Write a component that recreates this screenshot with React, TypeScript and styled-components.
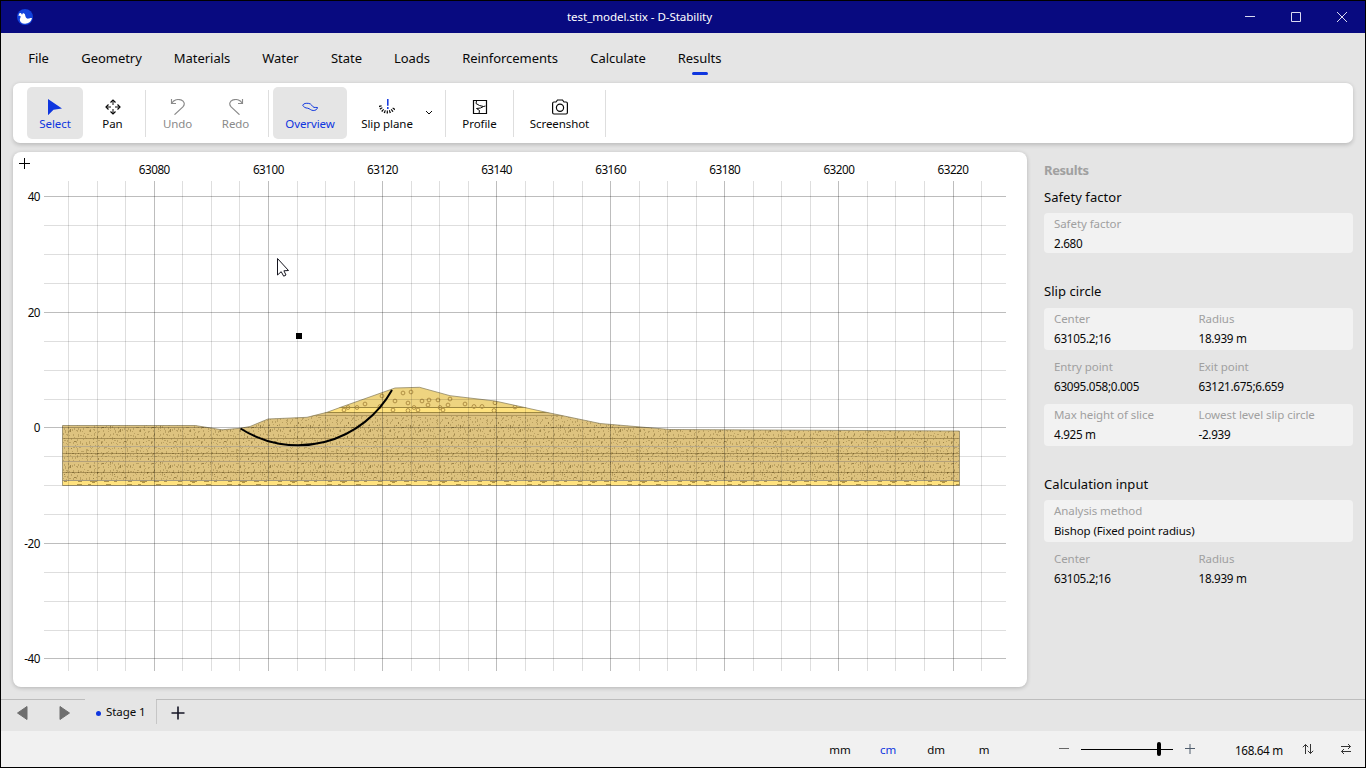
import React from 'react';
import styled, { createGlobalStyle } from 'styled-components';

const BLUE = '#0f36df';

const Global = createGlobalStyle`
  * { box-sizing: border-box; }
  body {
    margin: 0;
    font-family: "Noto Sans", "Open Sans", sans-serif;
    font-size: 11.5px;
    letter-spacing: -0.08px;
    color: #080808;
    overflow: hidden;
  }
  svg { display: block; }
`;

const Window = styled.div`
  width: 1366px;
  height: 768px;
  border: 1px solid #000;
  background: #e5e5e5;
  display: flex;
  flex-direction: column;
`;

const TitleBar = styled.header`
  height: 32px;
  flex: none;
  background: #080a80;
  color: #fff;
  display: grid;
  grid-template-columns: 1fr auto 1fr;
  align-items: center;
`;

const Title = styled.div`
  font-size: 11.6px;
  line-height: 16px;
  padding-bottom: 1px;
  margin-left: -90px;
  margin-right: -3px;
`;

const Logo = styled.div`
  padding-left: 16px;
`;

const WindowButtons = styled.div`
  display: flex;
  justify-content: flex-end;
`;

const WindowButton = styled.div`
  width: 46px;
  height: 32px;
  display: flex;
  align-items: center;
  justify-content: center;
`;

const Menu = styled.nav`
  height: 49px;
  flex: none;
  display: flex;
  padding-left: 27px;
  gap: 32px;
  font-size: 13px;
  letter-spacing: -0.04px;
`;

const MenuItem = styled.div<{ $w: number; $active?: boolean }>`
  width: ${p => p.$w}px;
  padding-top: 15px;
  line-height: 20px;
  white-space: nowrap;
  display: flex;
  flex-direction: column;
  align-items: center;
  &::after {
    content: "";
    margin-top: 4px;
    width: 16px;
    height: 3px;
    border-radius: 2px;
    background: ${p => (p.$active ? BLUE : 'transparent')};
  }
`;

const Toolbar = styled.div`
  height: 61px;
  flex: none;
  margin: 0 12px 0 12px;
  padding: 5px 14px;
  border-radius: 7px;
  border-top: 1px solid #d9d9d9;
  background: #fff;
  box-shadow: 0 2px 4px rgba(0, 0, 0, 0.18);
  display: flex;
`;

const ToolGroup = styled.div<{ $pad?: number }>`
  display: flex;
  gap: 2px;
  padding-right: ${p => p.$pad ?? 4}px;
  margin-right: 4px;
  background: linear-gradient(#dedede, #dedede) right 2px / 1px 47px no-repeat;
`;

const Tool = styled.div<{ $w: number; $active?: boolean; $muted?: boolean }>`
  width: ${p => p.$w}px;
  height: 52px;
  margin-top: -1px;
  border-radius: 5px;
  padding-top: 12px;
  background: ${p => (p.$active ? '#e5e5e5' : 'transparent')};
  color: ${p => (p.$active ? BLUE : p.$muted ? '#8a8a8a' : '#080808')};
  display: flex;
  flex-direction: column;
  align-items: center;
  line-height: 16px;
  white-space: nowrap;
  svg { margin-bottom: 1px; }
`;

const Chevron = styled.div`
  margin-top: 22px;
  width: 8px;
  margin-left: -2px;
`;

const Main = styled.main`
  flex: 1;
  display: flex;
  padding: 9px 12px 12px;
`;

const Canvas = styled.section`
  width: 1014px;
  height: 535px;
  border-radius: 8px;
  background: #fff;
  box-shadow: 0 1px 4px rgba(0, 0, 0, 0.22);
  text { font-size: 11.7px; letter-spacing: -0.5px; }
`;

const Side = styled.aside`
  width: 309px;
  margin: 8px 0 0 17px;
  display: flex;
  flex-direction: column;
`;

const SideTitle = styled.div`
  font-size: 13px;
  font-weight: 700;
  letter-spacing: -0.4px;
  line-height: 20px;
  color: #a0a0a0;
`;

const SectionTitle = styled.h2<{ $top: number; $bottom?: number }>`
  margin: ${p => p.$top}px 0 ${p => p.$bottom ?? 6}px;
  font-size: 13px;
  font-weight: 400;
  letter-spacing: 0.06px;
  line-height: 20px;
`;

const Card = styled.div<{ $shaded?: boolean; $h?: number }>`
  height: ${p => p.$h ?? 42}px;
  padding: 1px 10px;
  border-radius: 4px;
  background: ${p => (p.$shaded ? '#f2f2f2' : 'transparent')};
  display: grid;
  grid-template-columns: 144.5px 1fr;
  & + & { margin-top: 6px; }
`;

const Field = styled.div`
  line-height: 20px;
  white-space: nowrap;
`;

const FieldLabel = styled.div`
  color: #a0a0a0;
  letter-spacing: -0.07px;
`;

const FieldValue = styled.div<{ $numeric: boolean }>`
  font-size: ${p => (p.$numeric ? 11.7 : 11.5)}px;
  line-height: ${p => (p.$numeric ? 18 : 20)}px;
  letter-spacing: ${p => (p.$numeric ? -0.3 : -0.1)}px;
`;

const StageBar = styled.div`
  height: 32px;
  flex: none;
  display: flex;
`;

const StageNav = styled.div`
  width: 84px;
  border-top: 1px solid #bdbdbd;
  display: flex;
  padding: 6px 0 0 15px;
  gap: 31px;
`;

const StageTab = styled.div`
  width: 71px;
  height: 24px;
  padding: 5px 0 0 11px;
  line-height: 16px;
  display: flex;
  gap: 4px;
  white-space: nowrap;
`;

const StageDot = styled.span`
  width: 5px;
  height: 5px;
  border-radius: 50%;
  background: ${BLUE};
  margin: 7px 1px 0 0;
`;

const StageRest = styled.div`
  flex: 1;
  border-top: 1px solid #bdbdbd;
  background: linear-gradient(#c6c6c6, #c6c6c6) left top / 1px 24px no-repeat;
  padding: 6px 0 0 15px;
`;

const StatusBar = styled.footer`
  height: 36px;
  flex: none;
  background: #f1f1f1;
  display: flex;
  align-items: center;
  padding-left: 815px;
`;

const Unit = styled.div<{ $active?: boolean }>`
  width: 48px;
  padding-top: 2px;
  text-align: center;
  line-height: 16px;
  color: ${p => (p.$active ? BLUE : '#080808')};
`;

const Zoom = styled.div`
  display: flex;
  align-items: center;
  margin-left: 51px;
  gap: 12px;
`;

const Track = styled.div`
  width: 92px;
  height: 14px;
  background: linear-gradient(#000, #000) left 7px / 92px 1px no-repeat;
  padding-left: 76px;
`;

const Thumb = styled.div`
  width: 4px;
  height: 14px;
  border-radius: 2px;
  background: #000;
`;

const Scale = styled.div`
  margin-left: 40px;
  width: 48px;
  padding-top: 1px;
  font-size: 11.7px;
  letter-spacing: -0.35px;
  white-space: nowrap;
  line-height: 16px;
`;

const Swap = styled.div<{ $gap: number }>`
  margin-left: ${p => p.$gap}px;
`;

const Icon = ({ children, w = 16, h = 16, sw = 1 }: { children: React.ReactNode; w?: number; h?: number; sw?: number }) => (
  <svg width={w} height={h} viewBox={`0 0 ${w} ${h}`} fill="none" stroke="currentColor" strokeWidth={sw}>
    {children}
  </svg>
);

const SelectIcon = () => (
  <Icon><path d="M1 0v16.200L6.500 10.800l8.500-1.300z" fill="currentColor" stroke="none" /></Icon>
);
const PanIcon = () => (
  <Icon>
    <path d="M5.500 3.500 8 1l2.500 2.500M5.500 12.500 8 15l2.500-2.500M3.500 5.500 1 8l2.500 2.500M12.500 5.500 15 8l-2.500 2.500" strokeWidth="1.200" />
    <path d="M8 1.500v4.500M8 10v4.500M1.500 8H6M10 8h4.500" />
  </Icon>
);
const UndoIcon = () => (
  <Icon><path d="M1.500 0v4.500H6M1.700 4.200C4 .8 8-.2 11 .9c3.500 1.300 4.200 4.500 1.900 7L4.500 15.700" strokeWidth="1.150" /></Icon>
);
const RedoIcon = () => (
  <Icon><path d="M14.500 0v4.500H10M14.300 4.200C12 .8 8-.2 5 .9 1.500 2.200.8 5.400 3.100 7.900l8.400 7.800" strokeWidth="1.150" /></Icon>
);
const OverviewIcon = () => (
  <Icon><path d="M.7 6.200C1.800 4.300 4 4.100 6.700 4.400c3 .3 3.200 3.200 5.300 4 1.300.3 2.400-.3 3.500.1-.4 2.200-2 3-4.300 3-2.400-.1-3.400-1.900-5.500-2.300C3.500 9 1.700 8.300.7 6.200z" /></Icon>
);
const SlipIcon = () => (
  <Icon>
    <path d="M8.800-.5v7.200M8.800 8v2" stroke={BLUE} strokeWidth="1.500" />
    <path d="M1 6.500C2 11 5 13 8.300 13S14.500 11 15.800 8" strokeWidth="3" strokeDasharray="1.200 1.300" />
  </Icon>
);
const ProfileIcon = () => (
  <Icon>
    <path d="M1.500 1.500h13v13h-13z" strokeWidth="1.200" />
    <path d="M4.500 2 4 4.500l3.500 2 4 1 2-.5M11.500 7.500 8.500 9l-4 .5 3 2-.5 3" />
  </Icon>
);
const CameraIcon = () => (
  <Icon>
    <path d="M.6 4.500c0-1 .5-1.500 1.400-1.500h2l1.500-2h5L12 3h2c.9 0 1.400.5 1.400 1.500v9c0 1-.5 1.500-1.400 1.500H2c-.9 0-1.400-.5-1.400-1.500z" strokeWidth="1.200" />
    <circle cx="8" cy="8.700" r="3.600" strokeWidth="1.200" />
  </Icon>
);

const tools = {
  edit: [
    { label: 'Select', icon: <SelectIcon />, w: 56, active: true },
    { label: 'Pan', icon: <PanIcon />, w: 55 },
  ],
  history: [
    { label: 'Undo', icon: <UndoIcon />, w: 55, muted: true },
    { label: 'Redo', icon: <RedoIcon />, w: 57, muted: true },
  ],
  view: [
    { label: 'Overview', icon: <OverviewIcon />, w: 74, active: true },
    { label: 'Slip plane', icon: <SlipIcon />, w: 76 },
  ],
  profile: [{ label: 'Profile', icon: <ProfileIcon />, w: 59 }],
  capture: [{ label: 'Screenshot', icon: <CameraIcon />, w: 83 }],
};

type ToolDef = { label: string; icon: React.ReactNode; w: number; active?: boolean; muted?: boolean };

const Tools = ({ items }: { items: ToolDef[] }) => (
  <>
    {items.map(t => (
      <Tool key={t.label} $w={t.w} $active={t.active} $muted={t.muted}>
        {t.icon}
        {t.label}
      </Tool>
    ))}
  </>
);

const menu: [string, number][] = [
  ['File', 21], ['Geometry', 61], ['Materials', 56], ['Water', 37], ['State', 31],
  ['Loads', 36], ['Reinforcements', 96], ['Calculate', 56], ['Results', 43],
];

/* Soil hatch: short strokes jittered inside small cells of a repeating tile */
const TILE_W = 50;
const TILE_H = 36;
const CELL_W = 2.5;
const CELL_H = 4;
const hash = (n: number) => {
  const v = Math.sin(n * 127.1 + 31.7) * 43758.5453;
  return v - Math.floor(v);
};
const columns = TILE_W / CELL_W;
const marks = Array.from({ length: columns * (TILE_H / CELL_H) }, (_, i) => {
  const wide = hash(i + 900) > 0.9;
  return {
    x: Math.floor((i % columns) * CELL_W + hash(i) * CELL_W),
    y: Math.floor(i / columns) * CELL_H + Math.floor(hash(i + 300) * CELL_H),
    w: wide ? 2 : 1,
    h: wide ? 1 : 1 + Math.floor(hash(i + 600) * 2.2),
    o: hash(i + 1200) > 0.95 ? 0.5 : 0.26,
  };
});

const pebbles = [
  [382, 396], [403, 393], [411, 392], [365, 404], [395, 401], [408, 403], [422, 401], [429, 400],
  [438, 400], [450, 399], [428, 405], [448, 405], [465, 404], [474, 406.5], [482, 406.5], [357, 407.5],
  [348, 407.5], [414, 407.5], [495, 402.8], [380, 406.5], [440, 407.5], [515, 407], [344, 410], [393, 410],
  [408, 410.5], [418, 410], [494, 410.5], [443, 410],
];

const SURFACE = '62.500,425.500 195,425.500 222,429.800 240,428.300 250,426.500 268,419 307,417.300 327,412.300 340,407.500 395,388 419.500,387.300 450,395.700 495,401 545,412 600,423.500 670,429.500 959.500,431';

const Model = () => {
  const vertical = Array.from({ length: 33 }, (_, i) => Math.floor(154.4 + (i - 3) * 28.522));
  const horizontal = Array.from({ length: 17 }, (_, i) => Math.floor(196.85 + i * 28.88));
  return (
    <svg width="1014" height="535" viewBox="13 152 1014 535">
      <defs>
        <pattern id="clay" x="62" y="450" width={TILE_W} height={TILE_H} patternUnits="userSpaceOnUse">
          {marks.map((m, i) => (
            <rect key={i} x={m.x} y={m.y} width={m.w} height={m.h} fill="#5a4310" opacity={m.o} />
          ))}
        </pattern>
        <pattern id="gravel" x="62" y="481" width="50" height="5" patternUnits="userSpaceOnUse">
          <path d="M2 .5h3M16 .5h4M15 3.500h5M28 .5h7M30 1.500h3M42 .5h5M26 3.500h3M44 3.500h5" stroke="#7a5f20" opacity=".6" />
        </pattern>
        <clipPath id="ground">
          <polygon points={`${SURFACE} 959.500,485.500 62.500,485.500`} />
        </clipPath>
      </defs>

      <g clipPath="url(#ground)" shapeRendering="crispEdges">
        <rect x="62" y="380" width="898" height="28" fill="#eed480" />
        <rect x="62" y="407" width="898" height="5" fill="#ffe27e" />
        <rect x="62" y="412" width="898" height="69" fill="#dec37f" />
        <rect x="62" y="415" width="898" height="66" fill="url(#clay)" />
        <rect x="62" y="481" width="898" height="5" fill="#ffe27e" />
        <rect x="62" y="481" width="898" height="5" fill="url(#gravel)" />
        <path d="M62 407.500H960M62 412.500H960" stroke="#9d8740" />
        <path d="M62 415.500H960" stroke="#b39a5e" />
        <path d="M62 438.500H960M62 453.500H960M62 472.500H960" stroke="#8d7640" strokeOpacity=".65" />
        <path d="M62 446.500H960" stroke="#b9ab8b" />
        <path d="M62 461.500H960" stroke="#b3a07a" />
        <path d="M62 453.500H960M62 472.500H960" stroke="#4e3c10" strokeOpacity=".4" strokeDasharray="1 3 1 5 2 4 1 8" />
        <path d="M62 480.500H960" stroke="#a3977a" />
      </g>
      <g clipPath="url(#ground)" fill="none" stroke="#b08f45" strokeWidth="1">
        {pebbles.map(([x, y], i) => <circle key={i} cx={x} cy={y} r="1.900" />)}
      </g>
      <polygon points={`${SURFACE} 959.500,485.500 62.500,485.500`} fill="none" stroke="#8a8060" strokeOpacity=".75" />

      <g shapeRendering="crispEdges">
        {vertical.map((x, i) => (
          <path key={x} d={`M${x + 0.5} 181V671`} stroke="#000" strokeOpacity={(i + 1) % 4 === 0 ? 0.26 : 0.13} />
        ))}
        {horizontal.map((y, i) => (
          <path key={y} d={`M44 ${y + 0.5}H1006`} stroke="#000" strokeOpacity={i % 4 === 0 ? 0.26 : 0.13} />
        ))}
      </g>

      <path d="M240.500 428.500A108 109.300 0 0 0 392 390" fill="none" stroke="#000" strokeWidth="2" />
      <rect x="296" y="333" width="6" height="6" fill="#000" />
      <path d="M19 163.500h11M24.500 158v11" stroke="#000" />
      <path d="M277.500 258.500v16.500l3.700-3.300 2.500 4.500 2.300-1.200-2.100-4.200 4.600-.3z" fill="#fff" stroke="#15151f" />

      <g fill="#080808" textAnchor="middle">
        {[63080, 63100, 63120, 63140, 63160, 63180, 63200, 63220].map((v, i) => (
          <text key={v} x={154.3 + i * 114.1} y="174">{v}</text>
        ))}
      </g>
      <g fill="#080808" textAnchor="end">
        {[40, 20, 0, -20, -40].map((v, i) => (
          <text key={v} x="40" y={201 + i * 115.5}>{v}</text>
        ))}
      </g>
    </svg>
  );
};

const Entry = ({ label, value }: { label: string; value: string }) => (
  <Field>
    <FieldLabel>{label}</FieldLabel>
    <FieldValue $numeric={/^[-\d]/.test(value)}>{value}</FieldValue>
  </Field>
);

export default function App() {
  return (
    <Window>
      <Global />
      <TitleBar>
        <Logo>
          <svg width="16" height="16" viewBox="0 0 16 16">
            <circle cx="8" cy="8" r="8" fill="#1241dc" />
            <path d="M1 6.300 2 5.500C2 4.300 3.300 3.600 4.300 4.500L5 5.800 6 4l1.800.9.7 2.600c.2 1.400 1.600 2.300 2.900 2.100 1.300-.2 1.900-1 3.600-.6-.8 3.700-3.500 5.700-6.800 5.700-3.400.1-5.400-1.700-5.400-4 0-1.500 1.100-2.100.8-3.400-.5-.6-1.500-.7-2.600-1z" fill="#fff" />
          </svg>
        </Logo>
        <Title>test_model.stix - D-Stability</Title>
        <WindowButtons>
          <WindowButton><Icon w={10} h={10}><path d="M0 4.500h10" stroke="#dadaf0" /></Icon></WindowButton>
          <WindowButton><Icon w={10} h={10}><path d="M.5.5h9v9h-9z" stroke="#dadaf0" /></Icon></WindowButton>
          <WindowButton><Icon w={10} h={10}><path d="M0 0l10 10M10 0L0 10" stroke="#dadaf0" /></Icon></WindowButton>
        </WindowButtons>
      </TitleBar>

      <Menu>
        {menu.map(([label, w]) => (
          <MenuItem key={label} $w={w} $active={label === 'Results'}>{label}</MenuItem>
        ))}
      </Menu>

      <Toolbar>
        <ToolGroup $pad={6}><Tools items={tools.edit} /></ToolGroup>
        <ToolGroup $pad={5}><Tools items={tools.history} /></ToolGroup>
        <ToolGroup $pad={13}>
          <Tools items={tools.view} />
          <Chevron><Icon w={8} h={6}><path d="M1 1l3 3 3-3" /></Icon></Chevron>
        </ToolGroup>
        <ToolGroup $pad={5}><Tools items={tools.profile} /></ToolGroup>
        <ToolGroup $pad={5}><Tools items={tools.capture} /></ToolGroup>
      </Toolbar>

      <Main>
        <Canvas><Model /></Canvas>
        <Side>
          <SideTitle>Results</SideTitle>
          <SectionTitle $top={7}>Safety factor</SectionTitle>
          <Card $shaded $h={40}><Entry label="Safety factor" value="2.680" /></Card>
          <SectionTitle $top={28} $bottom={7}>Slip circle</SectionTitle>
          <Card $shaded>
            <Entry label="Center" value="63105.2;16" />
            <Entry label="Radius" value="18.939 m" />
          </Card>
          <Card>
            <Entry label="Entry point" value="63095.058;0.005" />
            <Entry label="Exit point" value="63121.675;6.659" />
          </Card>
          <Card $shaded>
            <Entry label="Max height of slice" value="4.925 m" />
            <Entry label="Lowest level slip circle" value="-2.939" />
          </Card>
          <SectionTitle $top={28}>Calculation input</SectionTitle>
          <Card $shaded><Entry label="Analysis method" value="Bishop (Fixed point radius)" /></Card>
          <Card>
            <Entry label="Center" value="63105.2;16" />
            <Entry label="Radius" value="18.939 m" />
          </Card>
        </Side>
      </Main>

      <StageBar>
        <StageNav>
          <Icon w={12} h={14}><path d="M11 .5v13L1.500 7z" fill="#6e6e6e" stroke="#6e6e6e" strokeLinejoin="round" /></Icon>
          <Icon w={12} h={14}><path d="M1 .5v13L10.500 7z" fill="#6e6e6e" stroke="#6e6e6e" strokeLinejoin="round" /></Icon>
        </StageNav>
        <StageTab><StageDot />Stage 1</StageTab>
        <StageRest>
          <Icon w={14} h={14} sw={1.6}><path d="M.5 7h13M7 .5v13" stroke="#151525" /></Icon>
        </StageRest>
      </StageBar>

      <StatusBar>
        <Unit>mm</Unit>
        <Unit $active>cm</Unit>
        <Unit>dm</Unit>
        <Unit>m</Unit>
        <Zoom>
          <Icon w={10} h={10}><path d="M0 4.500h10" stroke="#666" /></Icon>
          <Track><Thumb /></Track>
          <Icon w={10} h={10}><path d="M0 4.500h10M5 0v10" stroke="#4f5d6d" /></Icon>
        </Zoom>
        <Scale>168.64 m</Scale>
        <Swap $gap={19}>
          <Icon w={12} h={12}><path d="M3.500 11V1.500M.8 4.200 3.500 1.500l2.700 2.700M8.500 1v9.500M5.800 7.800l2.700 2.700 2.700-2.700" stroke="#333" /></Icon>
        </Swap>
        <Swap $gap={26}>
          <Icon w={12} h={12}><path d="M1 3.500h9.500M8 1l2.500 2.500L8 6M11 8.500H1.500M4 6 1.500 8.500 4 11" stroke="#333" /></Icon>
        </Swap>
      </StatusBar>
    </Window>
  );
}
